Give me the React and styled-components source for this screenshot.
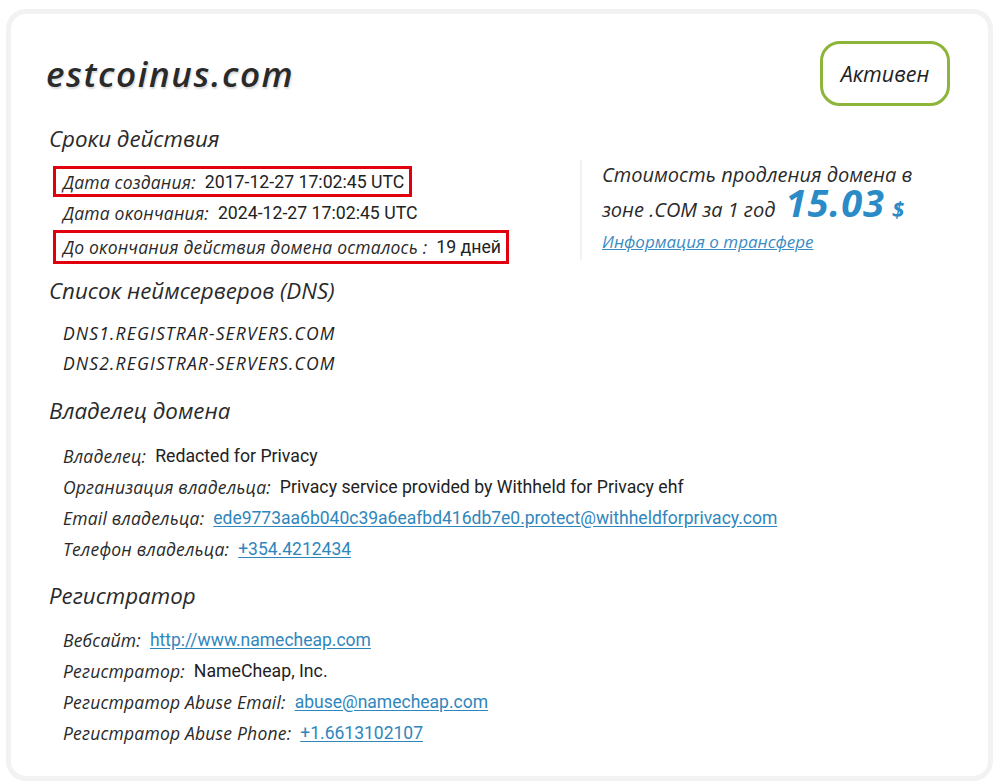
import React from "react";
import styled, { createGlobalStyle } from "styled-components";

const Global = createGlobalStyle`
  html, body { margin: 0; padding: 0; background: #ffffff; }
  body { font-family: "Open Sans", "Noto Sans", sans-serif; color: #222; }
`;

const Card = styled.div`
  box-sizing: border-box;
  margin: 9px 8px 3px 6px;
  width: 987px;
  height: 772px;
  border: 5px solid #f2f2f2;
  border-radius: 20px;
  padding: 27px 38px 0 38px;
  background: #fff;
`;

const Header = styled.div`
  display: flex;
  justify-content: space-between;
  align-items: center;
  height: 65px;
`;

const Title = styled.h1`
  margin: 0 0 0 -3px;
  font-family: "Open Sans", sans-serif;
  font-style: italic;
  font-weight: 600;
  font-size: 35px;
  letter-spacing: 1.6px;
  color: #2a2a2a;
  text-shadow: 1px 2px 2px #d9d9d9;
`;

const Badge = styled.div`
  box-sizing: border-box;
  width: 130px;
  height: 65px;
  border: 3px solid #8cb53a;
  border-radius: 20px;
  display: flex;
  align-items: center;
  justify-content: center;
  font-style: italic;
  font-size: 21.5px;
  color: #222;
`;

const Section = styled.section`
  margin-top: ${(p) => p.$top}px;
`;

const Heading = styled.h2`
  margin: 0 0 ${(p) => p.$gap || 12}px 0;
  font-weight: 400;
  font-style: italic;
  font-size: 22.3px;
  line-height: 30px;
  color: #2a2a2a;
`;

const Split = styled.div`
  display: flex;
  align-items: flex-start;
`;

const LeftCol = styled.div`
  width: 531px;
  display: flex;
  flex-direction: column;
  align-items: flex-start;
`;

const Row = styled.div`
  box-sizing: border-box;
  display: inline-flex;
  align-items: center;
  height: ${(p) => (p.$tall ? 34 : 31)}px;
  margin-top: ${(p) => (p.$tall ? 2 : 0)}px;
  margin-left: 4px;
  padding: 0 5px 0 7px;
  border: 3px solid ${(p) => (p.$mark ? "#e2000f" : "transparent")};
  white-space: nowrap;
`;

const Label = styled.span`
  font-style: italic;
  font-size: 17.5px;
  letter-spacing: 0.2px;
  color: #2a2a2a;
  margin-right: 9px;
`;

const Value = styled.span`
  font-family: Roboto, "Liberation Sans", sans-serif;
  font-size: 17.7px;
  color: #222;
`;

const LinkValue = styled.a`
  font-family: Roboto, "Liberation Sans", sans-serif;
  font-size: 17.5px;
  color: #2f86bd;
  text-decoration: underline;
  text-underline-offset: 2px;
`;

const PriceBox = styled.div`
  flex: 1;
  height: 100px;
  margin-top: -6px;
  border-left: 2px solid #f2f2f2;
  padding-left: 20px;
`;

const PriceText = styled.div`
  font-style: italic;
  font-size: 20px;
  line-height: 35px;
  margin-top: -3px;
  color: #2a2a2a;
`;

const Amount = styled.span`
  font-weight: 700;
  font-size: 38px;
  letter-spacing: 1px;
  line-height: 20px;
  color: #2a8bc7;
  margin-left: 10px;
`;

const Currency = styled.span`
  font-weight: 700;
  font-size: 22px;
  line-height: 20px;
  color: #2a8bc7;
  margin-left: 7px;
`;

const TransferLink = styled.a`
  display: block;
  margin-top: 4px;
  font-style: italic;
  font-weight: 500;
  font-size: 17px;
  line-height: 22px;
  color: #3a8cc2;
  text-decoration: underline;
`;

const Dns = styled.div`
  height: 30px;
  display: flex;
  align-items: center;
  margin-left: 14px;
  font-style: italic;
  font-size: 17.5px;
  letter-spacing: 1.15px;
  color: #222;
`;

const List = styled.div`
  display: flex;
  flex-direction: column;
  align-items: flex-start;
`;

const owner = [
  { label: "Владелец:", value: "Redacted for Privacy" },
  { label: "Организация владельца:", value: "Privacy service provided by Withheld for Privacy ehf" },
  { label: "Email владельца:", value: "ede9773aa6b040c39a6eafbd416db7e0.protect@withheldforprivacy.com", link: true },
  { label: "Телефон владельца:", value: "+354.4212434", link: true },
];

const registrar = [
  { label: "Вебсайт:", value: "http://www.namecheap.com", link: true },
  { label: "Регистратор:", value: "NameCheap, Inc." },
  { label: "Регистратор Abuse Email:", value: "abuse@namecheap.com", link: true },
  { label: "Регистратор Abuse Phone:", value: "+1.6613102107", link: true },
];

function InfoRow({ label, value, link, mark, tall }) {
  return (
    <Row $mark={mark} $tall={tall}>
      <Label>{label}</Label>
      {link ? <LinkValue href="#">{value}</LinkValue> : <Value>{value}</Value>}
    </Row>
  );
}

export default function App() {
  return (
    <>
      <Global />
      <Card>
        <Header>
          <Title>estcoinus.com</Title>
          <Badge>Активен</Badge>
        </Header>

        <Section $top={18}>
          <Heading>Сроки действия</Heading>
          <Split>
            <LeftCol>
              <InfoRow mark label="Дата создания:" value="2017-12-27 17:02:45 UTC" />
              <InfoRow label="Дата окончания:" value="2024-12-27 17:02:45 UTC" />
              <InfoRow mark tall label="До окончания действия домена осталось :" value="19 дней" />
            </LeftCol>
            <PriceBox>
              <PriceText>
                Стоимость продления домена в
                <br />
                зоне .COM за 1 год<Amount>15.03</Amount>
                <Currency>$</Currency>
              </PriceText>
              <TransferLink href="#">Информация о трансфере</TransferLink>
            </PriceBox>
          </Split>
        </Section>

        <Section $top={12}>
          <Heading>Список неймсерверов (DNS)</Heading>
          <Dns>DNS1.REGISTRAR-SERVERS.COM</Dns>
          <Dns>DNS2.REGISTRAR-SERVERS.COM</Dns>
        </Section>

        <Section $top={18}>
          <Heading $gap={14}>Владелец домена</Heading>
          <List>
            {owner.map((r) => (
              <InfoRow key={r.label} {...r} />
            ))}
          </List>
        </Section>

        <Section $top={17}>
          <Heading $gap={13}>Регистратор</Heading>
          <List>
            {registrar.map((r) => (
              <InfoRow key={r.label} {...r} />
            ))}
          </List>
        </Section>
      </Card>
    </>
  );
}
